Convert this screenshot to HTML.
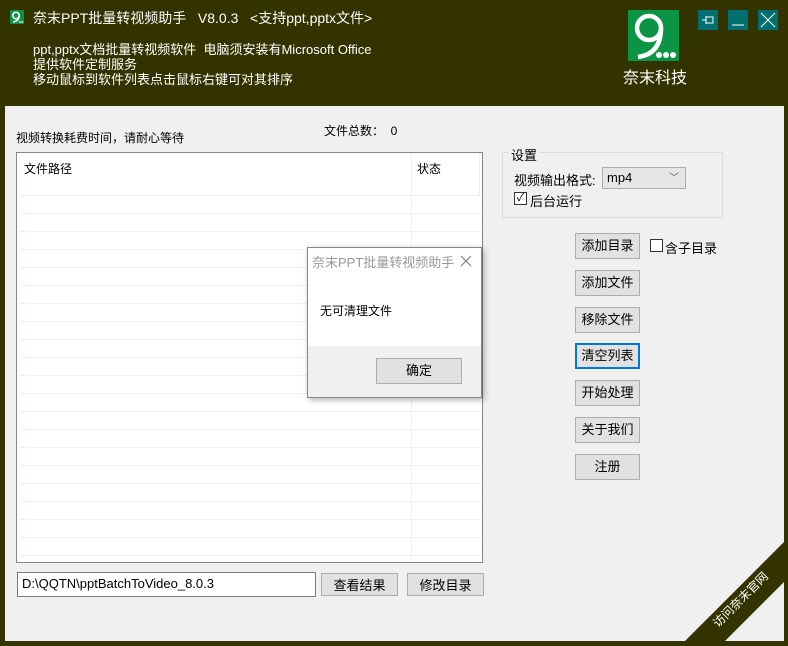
<!DOCTYPE html>
<html><head><meta charset="utf-8"><style>
*{margin:0;padding:0;box-sizing:border-box}
body{width:788px;height:646px;background:#333300;position:relative;overflow:hidden;font-family:"Liberation Sans","Noto Sans CJK SC",sans-serif;font-size:12px;color:#000}
.a{position:absolute}
.w{color:#fff;font-size:13px}
.btn{position:absolute;background:#e1e1e1;border:1px solid #adadad;text-align:center;font-size:13px;line-height:23px}
.row{position:absolute;left:3px;width:461px;height:1px;background:#f0f0f0}
</style></head><body>
<div class="a" style="left:10px;top:10px;width:14px;height:14px;background:#0a9444"><svg width="14" height="14"><circle cx="6" cy="5.5" r="3.2" stroke="#fff" stroke-width="1.6" fill="none"/><path d="M9.2 5.5Q9.2 11 3 12" stroke="#fff" stroke-width="1.6" fill="none"/><circle cx="10" cy="12" r="0.9" fill="#fff"/><circle cx="12.3" cy="12" r="0.9" fill="#fff"/></svg></div>
<div class="a w" style="left:33px;top:8px;font-size:14px">奈末PPT批量转视频助手&nbsp;&nbsp; V8.0.3&nbsp;&nbsp; &lt;支持ppt,pptx文件&gt;</div>
<div class="a w" style="left:33px;top:42px;line-height:15px">ppt,pptx文档批量转视频软件&nbsp; 电脑须安装有Microsoft Office<br>提供软件定制服务<br>移动鼠标到软件列表点击鼠标右键可对其排序</div>
<div class="a" style="left:628px;top:10px;width:51px;height:51px;background:#0a9444;overflow:hidden">
<svg width="51" height="51"><circle cx="21" cy="18" r="12" stroke="#fff" stroke-width="4.5" fill="none"/><path d="M33 18Q33 44 10 47" stroke="#fff" stroke-width="4.5" fill="none"/><circle cx="31" cy="45" r="3" fill="#fff"/><circle cx="38" cy="45" r="3" fill="#fff"/><circle cx="45" cy="45" r="3" fill="#fff"/></svg></div>
<div class="a w" style="left:623px;top:64px;font-size:16px">奈末科技</div>
<div class="a" style="left:698px;top:10px;width:20px;height:20px;background:#006f6f"><svg width="20" height="20"><path d="M4 10h4M8 6v8M8 7h7v6H8" stroke="#fff" fill="none"/></svg></div>
<div class="a" style="left:728px;top:10px;width:20px;height:20px;background:#006f6f"><svg width="20" height="20"><path d="M4 15h12" stroke="#fff"/></svg></div>
<div class="a" style="left:758px;top:10px;width:20px;height:20px;background:#006f6f"><svg width="20" height="20"><path d="M3 3l14 14M17 3L3 17" stroke="#fff"/></svg></div>
<div class="a" style="left:5px;top:106px;width:779px;height:535px;background:#f0f0f0;overflow:hidden">
<svg class="a" style="left:0;top:0" width="779" height="535"><polygon points="779,436 779,476 720,535 680,535" fill="#333300"/><text transform="translate(713,522) rotate(-45)" fill="#fff" font-size="12" font-family="Noto Sans CJK SC">访问奈末官网</text></svg>
</div>
<div class="a" style="left:16px;top:129px">视频转换耗费时间，请耐心等待</div>
<div class="a" style="left:324px;top:122px">文件总数：&nbsp; <span style="color:#000">0</span></div>
<div class="a" style="left:16px;top:152px;width:467px;height:411px;background:#fff;border:1px solid #828790">
<div class="a" style="left:7px;top:7px">文件路径</div>
<div class="a" style="left:400px;top:7px">状态</div>
<div class="a" style="left:394px;top:0;width:1px;height:409px;background:#f0f0f0"></div>
<div class="a" style="left:462px;top:0;width:1px;height:42px;background:#f0f0f0"></div>
<div class="row" style="top:42px"></div><div class="row" style="top:60px"></div><div class="row" style="top:78px"></div><div class="row" style="top:96px"></div><div class="row" style="top:114px"></div><div class="row" style="top:132px"></div><div class="row" style="top:150px"></div><div class="row" style="top:168px"></div><div class="row" style="top:186px"></div><div class="row" style="top:204px"></div><div class="row" style="top:222px"></div><div class="row" style="top:240px"></div><div class="row" style="top:258px"></div><div class="row" style="top:276px"></div><div class="row" style="top:294px"></div><div class="row" style="top:312px"></div><div class="row" style="top:330px"></div><div class="row" style="top:348px"></div><div class="row" style="top:366px"></div><div class="row" style="top:384px"></div><div class="row" style="top:402px"></div>
</div>
<div class="a" style="left:17px;top:572px;width:299px;height:25px;background:#fff;border:1px solid #7a7a7a;padding:3px 4px;font-size:13px">D:\QQTN\pptBatchToVideo_8.0.3</div>
<div class="btn" style="left:321px;top:573px;width:77px;height:23px">查看结果</div>
<div class="btn" style="left:407px;top:573px;width:77px;height:23px">修改目录</div>
<div class="a" style="left:502px;top:152px;width:221px;height:66px;border:1px solid #dcdcdc"></div>
<div class="a" style="left:509px;top:145px;background:#f0f0f0;padding:0 2px;font-size:13px">设置</div>
<div class="a" style="left:514px;top:170px;font-size:13px">视频输出格式:</div>
<div class="a" style="left:602px;top:167px;width:84px;height:22px;background:#e5e5e5;border:1px solid #acacac;padding:2px 4px;font-size:13px">mp4<span style="position:absolute;right:6px;top:1px;font-size:10px;color:#555">﹀</span></div>
<div class="a" style="left:514px;top:192px;width:13px;height:13px;border:1px solid #333;background:#fff;font-size:11px;line-height:11px;text-align:center">✓</div>
<div class="a" style="left:530px;top:191px;font-size:13px">后台运行</div>
<div class="btn" style="left:575px;top:233px;width:65px;height:26px">添加目录</div>
<div class="a" style="left:650px;top:239px;width:13px;height:13px;border:1px solid #333;background:#fff"></div>
<div class="a" style="left:665px;top:238px;font-size:13px">含子目录</div>
<div class="btn" style="left:575px;top:270px;width:65px;height:26px">添加文件</div>
<div class="btn" style="left:575px;top:307px;width:65px;height:26px">移除文件</div>
<div class="btn" style="left:575px;top:343px;width:65px;height:26px;border:1px solid #0078d7;box-shadow:inset 0 0 0 1px #0078d7">清空列表</div>
<div class="btn" style="left:575px;top:380px;width:65px;height:26px">开始处理</div>
<div class="btn" style="left:575px;top:417px;width:65px;height:26px">关于我们</div>
<div class="btn" style="left:575px;top:454px;width:65px;height:26px">注册</div>
<div class="a" style="left:307px;top:247px;width:175px;height:151px;background:#fff;border:1px solid #888;box-shadow:2px 2px 6px rgba(0,0,0,.3)">
<div class="a" style="left:4px;top:4px;color:#999;font-size:13px">奈末PPT批量转视频助手</div>
<svg class="a" style="left:152px;top:7px" width="12" height="12"><path d="M1 1l10 10M11 1L1 11" stroke="#777"/></svg>
<div class="a" style="left:12px;top:54px">无可清理文件</div>
<div class="a" style="left:0;top:98px;width:173px;height:51px;background:#f0f0f0"></div>
<div class="btn" style="left:68px;top:110px;width:86px;height:26px">确定</div>
</div>
</body></html>
